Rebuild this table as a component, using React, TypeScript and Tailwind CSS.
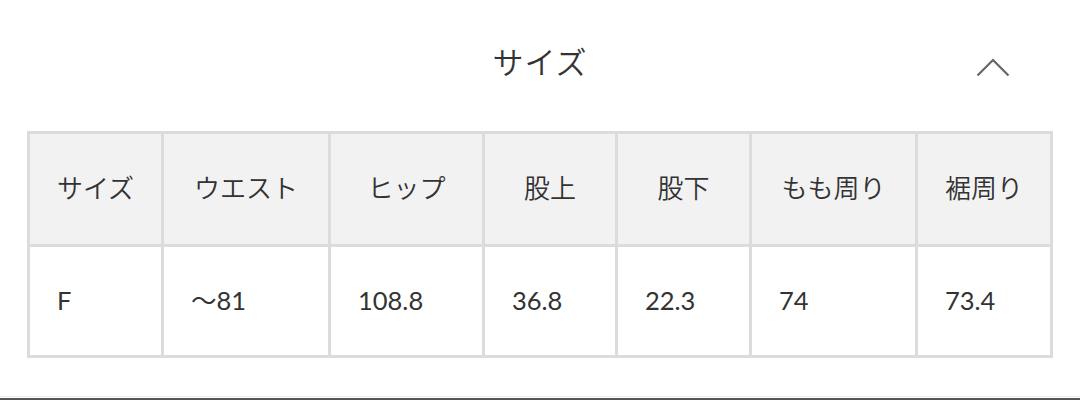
const headers = ["サイズ", "ウエスト", "ヒップ", "股上", "股下", "もも周り", "裾周り"];
const values = ["F", "〜81", "108.8", "36.8", "22.3", "74", "73.4"];

export default function App() {
  return (
    <div
      className="w-[1080px] h-[400px] bg-white text-[#333333] overflow-hidden"
      style={{ fontFamily: 'Lato, "Noto Sans CJK JP", sans-serif' }}
    >
      <div className="grid grid-cols-[1fr_auto_1fr] items-center h-[131px]">
        <div />
        <h2 className="text-[31px] leading-none font-[350] tracking-[1px] pb-[6px]">サイズ</h2>
        <div className="flex justify-end pr-[70px]">
          <svg width="34" height="20" viewBox="0 0 34 20" fill="none" className="mt-[2px]">
            <path d="M1.5 18.5 L17 3 L32.5 18.5" stroke="#666666" strokeWidth="2.2" />
          </svg>
        </div>
      </div>

      <div className="ml-[27px] w-[1026px] grid grid-cols-[131px_164px_151px_130px_131px_163px_132px] grid-rows-[110px_108px] gap-[3px] p-[3px] bg-[#dcdcdc]">
        {headers.map((h) => (
          <div key={h} className="bg-[#f2f2f2] flex items-center justify-center text-[26px] font-[350] pb-[2px]">
            {h}
          </div>
        ))}
        {values.map((v, i) => (
          <div key={i} className="bg-white flex items-center pl-[27px] text-[25.5px] pb-[2px]">
            {v}
          </div>
        ))}
      </div>

      <div className="mt-[38px] h-[1px] bg-[#eeeeee]" />
      <div className="mt-[1px] h-[3px] bg-[#555555]" />
    </div>
  );
}
